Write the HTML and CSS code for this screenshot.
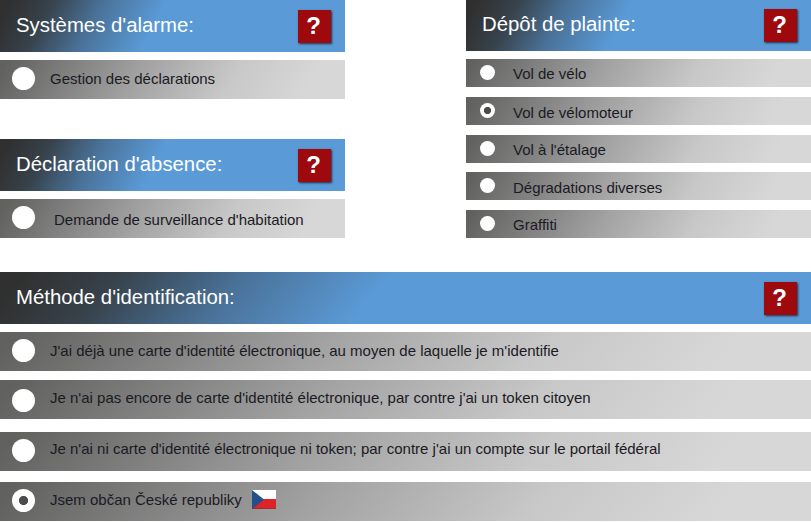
FILE: index.html
```
<!DOCTYPE html>
<html lang="fr">
<head>
<meta charset="utf-8">
<title>Police en ligne</title>
<link rel="stylesheet" href="styles.css">
</head>
<body>
<main class="page">
  <div class="top">
    <div class="side">
      <section class="group">
        <header class="head"><h2>Systèmes d'alarme:</h2><button class="help">?</button></header>
        <label class="row"><span class="radio"></span><span class="text">Gestion des déclarations</span></label>
      </section>
      <section class="group">
        <header class="head"><h2>Déclaration d'absence:</h2><button class="help">?</button></header>
        <label class="row lower indent"><span class="radio"></span><span class="text">Demande de surveillance d'habitation</span></label>
      </section>
    </div>
    <section class="group complaint">
      <header class="head"><h2>Dépôt de plainte:</h2><button class="help">?</button></header>
      <label class="row small"><span class="radio"></span><span class="text">Vol de vélo</span></label>
      <label class="row small lower"><span class="radio on"></span><span class="text">Vol de vélomoteur</span></label>
      <label class="row small"><span class="radio"></span><span class="text">Vol à l'étalage</span></label>
      <label class="row small lower"><span class="radio"></span><span class="text">Dégradations diverses</span></label>
      <label class="row small"><span class="radio"></span><span class="text">Graffiti</span></label>
    </section>
  </div>
  <section class="group method">
    <header class="head"><h2>Méthode d'identification:</h2><button class="help">?</button></header>
    <label class="row first"><span class="radio"></span><span class="text">J'ai déjà une carte d'identité électronique, au moyen de laquelle je m'identifie</span></label>
    <label class="row second"><span class="radio"></span><span class="text">Je n'ai pas encore de carte d'identité électronique, par contre j'ai un token citoyen</span></label>
    <label class="row third"><span class="radio"></span><span class="text">Je n'ai ni carte d'identité électronique ni token; par contre j'ai un compte sur le portail fédéral</span></label>
    <label class="row fourth"><span class="radio on"></span><span class="text">Jsem občan České republiky</span>
      <svg class="flag" viewBox="0 0 24 19" width="24" height="19"><path fill="#fff" d="M0 0h24v10H0z"/><path fill="#dc2328" d="M0 9h24v10H0z"/><path fill="#235089" d="M0 0l12 9.5L0 19z"/><path d="M0 18.5h24" stroke="#7d3434" stroke-opacity=".6"/></svg>
    </label>
  </section>
</main>
</body>
</html>
```
FILE: styles.css
```
* { box-sizing: border-box; }
body {
  margin: 0;
  background: #fff;
  font-family: "Liberation Sans", Arial, sans-serif;
  overflow: hidden;
}
.page { width: 811px; height: 522px; }
.top {
  display: flex;
  justify-content: space-between;
  height: 272px;
}
.side, .complaint { width: 345px; }
.side .group { height: 139px; }
.head {
  display: flex;
  justify-content: space-between;
  height: 52px;
  margin-bottom: 8px;
  padding: 10px 14px 0 16px;
  background: linear-gradient(118deg, #303030 3%, #37424b 14%, #4a7299 28%, #5a9ad6 45%);
}
.head h2 {
  margin: 3px 0 0;
  font-size: 20.35px;
  line-height: 24px;
  font-weight: 400;
  color: #fff;
  white-space: nowrap;
}
.complaint .head { height: 51px; padding-top: 9px; }
.method .head { background: linear-gradient(130deg, #303030 3%, #37424b 14%, #4a7299 29%, #5a9ad6 46%); }
.help {
  width: 33px;
  height: 33px;
  padding: 0 2px 1px 0;
  border: 0;
  background: #9d090d;
  box-shadow: 1px 1px 2px #1c3048;
  color: #fff;
  font: bold 24px/30px "Liberation Sans", Arial, sans-serif;
}
.row {
  display: flex;
  align-items: flex-start;
  height: 39px;
  padding: 7px 0 0 12px;
  background: linear-gradient(120deg, #616160 2%, #a2a2a2 40%, #c8c8c8 66%, #d7d7d7 88%);
  color: #1b1a24;
  font-size: 15px;
  line-height: 18px;
  white-space: nowrap;
}
.method .row { background: linear-gradient(130deg, #616160 2%, #a2a2a2 39%, #c8c8c8 66%, #d7d7d7 88%); }
.radio {
  flex: none;
  width: 23px;
  height: 23px;
  border-radius: 50%;
  background: #fff;
}
.radio.on { background: radial-gradient(circle, #4b4b4b 4.2px, #fff 5px); }
.text { margin: 3px 0 0 15px; }
.lower .text { margin-top: 5px; }
.indent .text { margin-left: 19px; }
.small {
  height: 28px;
  margin-bottom: 10px;
  padding: 6px 0 0 14px;
}
.small .radio { width: 15px; height: 15px; }
.small .radio.on { background: radial-gradient(circle, #4b4b4b 3.2px, #fff 4px); }
.small .text { margin: 0 0 0 18px; }
.small.lower .text { margin-top: 1px; }
.small:nth-child(4) { margin-bottom: 9px; }
.first { margin-bottom: 9px; }
.second { margin-bottom: 13px; padding-top: 9px; }
.second .text { margin-top: 0; }
.third { margin-bottom: 11px; }
.third .text { margin-top: 1px; }
.fourth .text { margin-top: 2px; }
.flag { margin: 1px 0 0 10px; }
```
